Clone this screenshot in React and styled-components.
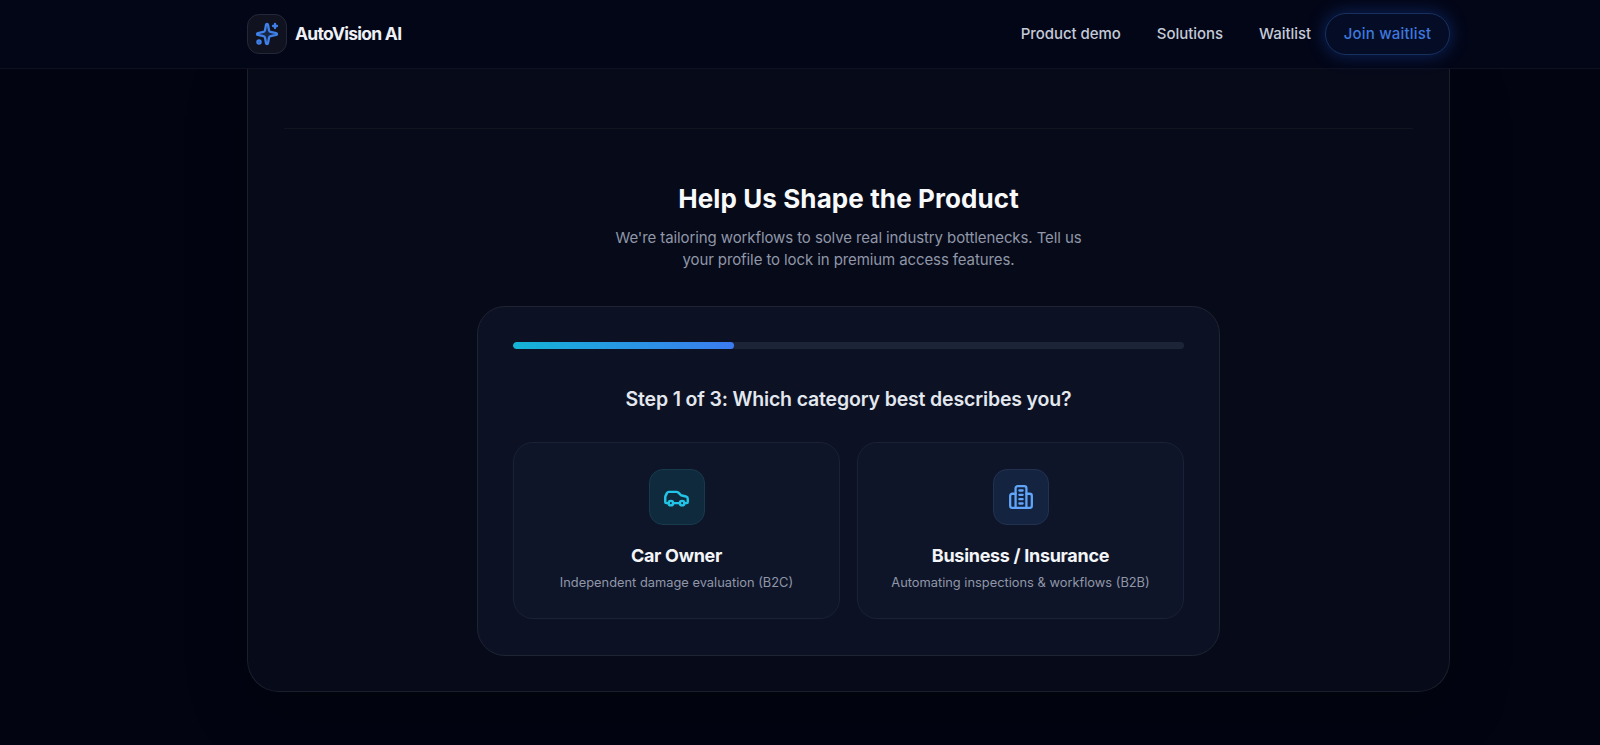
import React from 'react';
import styled, { createGlobalStyle } from 'styled-components';
import { Car } from 'lucide-react';

const Global = createGlobalStyle`
  html, body { margin: 0; padding: 0; background: #020412; overflow: hidden; }
  * { box-sizing: border-box; }
  body { font-family: Inter, "Liberation Sans", sans-serif; -webkit-font-smoothing: antialiased; }
`;
const Page = styled.div`
  height: 745px; display: flex; flex-direction: column;
  background: #020412;
`;
const Header = styled.header`
  height: 69px; flex: none; display: flex; align-items: center; justify-content: space-between;
  padding: 0 150px 1px 247px;
  background: #030617; border-bottom: 1px solid #0e1120;
  position: relative; z-index: 2;
`;
const Brand = styled.div`display: flex; align-items: center; gap: 8px;`;
const LogoBox = styled.div`
  width: 40px; height: 40px; border-radius: 12px; display: grid; place-items: center;
  background: #10131f; border: 1px solid #23273a; color: #3f7fe8;
`;
const BrandName = styled.span`
  font-size: 17.5px; font-weight: 700; color: #eef0f5; letter-spacing: -0.74px;
`;
const Nav = styled.nav`display: flex; align-items: center;`;
const NavLink = styled.a`
  font-size: 15px; font-weight: 500; color: #c3cad8; margin-right: ${p => p.$gap}px; letter-spacing: -0.05px;
`;
const JoinButton = styled.button`
  width: 125px; height: 42px; border-radius: 21px; font: 500 15px Inter, sans-serif; letter-spacing: 0.2px;
  color: #3e78de; background: #050c26; border: 1px solid #17305f; padding: 0;
  box-shadow: 0 0 18px rgba(28, 84, 200, 0.42);
`;
const Main = styled.main`flex: 1; padding: 0 150px 53px 247px;`;
const Card = styled.section`
  height: 623px; background: #070a19; border: 1px solid #1b1e2d; border-top: none;
  border-radius: 0 0 32px 32px; padding: 59px 36px 0;
  box-shadow: 0 20px 60px rgba(0,0,0,.32);
  display: flex; flex-direction: column; align-items: center;
`;
const Divider = styled.div`width: 100%; height: 1px; background: #12151f; flex: none;`;
const Heading = styled.h2`
  margin: 54px 0 0; font-size: 26px; line-height: 32px; font-weight: 700; color: #f8f9fb; letter-spacing: 0.1px;
`;
const Sub = styled.p`
  margin: 12px 0 0; width: 500px; text-align: center; font-size: 15px; line-height: 22px; color: #8f97a8; letter-spacing: -0.1px;
`;
const Panel = styled.div`
  width: 743px; height: 350px; margin-top: 35px; flex: none; padding: 35px 35px 0;
  background: #0c1224; border: 1px solid #1f2433; border-radius: 28px;
`;
const Track = styled.div`height: 7px; border-radius: 4px; background: #1c2538; overflow: hidden;`;
const Fill = styled.div`
  height: 100%; border-radius: 4px; background: linear-gradient(90deg, #14b4d6, #3b7bf0);
`;
const StepTitle = styled.h3`
  margin: 36px 0 0; text-align: center; font-size: 19.5px; line-height: 28px; font-weight: 600; color: #e3e7ee; letter-spacing: -0.16px;
`;
const Options = styled.div`display: grid; grid-template-columns: 1fr 1fr; gap: 17px; margin-top: 29px;`;
const Option = styled.div`
  height: 177px; border-radius: 20px; background: #0f1528; border: 1px solid #1b2136;
  padding-top: 26px; display: flex; flex-direction: column; align-items: center;
`;
const IconBox = styled.div`
  width: 56px; height: 56px; border-radius: 14px; display: grid; place-items: center;
  background: ${p => p.$bg}; border: 1px solid ${p => p.$border}; color: ${p => p.$color};
`;
const OptionTitle = styled.div`
  margin-top: 19px; font-size: 18px; line-height: 24px; font-weight: 700; color: #f3f5f8; letter-spacing: -0.3px;
`;
const OptionDesc = styled.div`
  margin-top: 5.5px; font-size: 12.85px; line-height: 18px; color: #8f97a8;
`;

const SparkleIcon = () => (
  <svg width="24" height="24" viewBox="0 0 24 24" fill="none" stroke="currentColor" strokeWidth="2.3" strokeLinecap="round" strokeLinejoin="round">
    <path fill="currentColor" fillOpacity="0.18" d="M11.017 2.814a1 1 0 0 1 1.966 0l1.051 5.558a2 2 0 0 0 1.594 1.594l5.558 1.051a1 1 0 0 1 0 1.966l-5.558 1.051a2 2 0 0 0-1.594 1.594l-1.051 5.558a1 1 0 0 1-1.966 0l-1.051-5.558a2 2 0 0 0-1.594-1.594l-5.558-1.051a1 1 0 0 1 0-1.966l5.558-1.051a2 2 0 0 0 1.594-1.594z" />
    <path d="M20 2v4" />
    <path d="M22 4h-4" />
    <circle cx="4" cy="20" r="1.6" />
  </svg>
);

const BuildingIcon = () => (
  <svg width="26" height="26" viewBox="0 0 24 24" fill="none" stroke="currentColor" strokeWidth="2.1" strokeLinecap="round" strokeLinejoin="round">
    <path d="M7 22V4a2 2 0 0 1 2-2h6a2 2 0 0 1 2 2v18Z" />
    <path d="M7 9H4a2 2 0 0 0-2 2v9a2 2 0 0 0 2 2h3" />
    <path d="M17 9h3a2 2 0 0 1 2 2v9a2 2 0 0 1-2 2h-3" />
    <path d="M10.5 6h3" />
    <path d="M10.5 10h3" />
    <path d="M10.5 14h3" />
    <path d="M10.5 18h3" />
  </svg>
);

export default function App() {
  return (
    <Page>
      <Global />
      <Header>
        <Brand>
          <LogoBox><SparkleIcon /></LogoBox>
          <BrandName>AutoVision AI</BrandName>
        </Brand>
        <Nav>
          <NavLink $gap={36}>Product demo</NavLink>
          <NavLink $gap={36}>Solutions</NavLink>
          <NavLink $gap={14}>Waitlist</NavLink>
          <JoinButton>Join waitlist</JoinButton>
        </Nav>
      </Header>
      <Main>
        <Card>
          <Divider />
          <Heading>Help Us Shape the Product</Heading>
          <Sub>We're tailoring workflows to solve real industry bottlenecks. Tell us your profile to lock in premium access features.</Sub>
          <Panel>
            <Track><Fill style={{ width: '33%' }} /></Track>
            <StepTitle>Step 1 of 3: Which category best describes you?</StepTitle>
            <Options>
              <Option>
                <IconBox $bg="#0e2a3c" $border="#173a4c" $color="#22c3e6"><Car size={27} strokeWidth={2.2} /></IconBox>
                <OptionTitle>Car Owner</OptionTitle>
                <OptionDesc>Independent damage evaluation (B2C)</OptionDesc>
              </Option>
              <Option>
                <IconBox $bg="#14233f" $border="#22314f" $color="#60a5fa"><BuildingIcon /></IconBox>
                <OptionTitle>Business / Insurance</OptionTitle>
                <OptionDesc>Automating inspections &amp; workflows (B2B)</OptionDesc>
              </Option>
            </Options>
          </Panel>
        </Card>
      </Main>
    </Page>
  );
}
